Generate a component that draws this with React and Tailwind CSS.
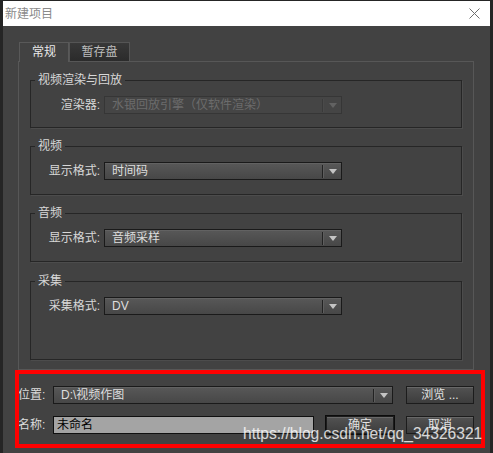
import React from "react";

function Arrow({ disabled }) {
  return (
    <div className="flex h-full w-[19px] items-center">
      <div className="flex h-[13px]">
        <span className={disabled ? "w-px bg-[#3a3a3a]" : "w-px bg-[#222222]"} />
        <span className={disabled ? "w-px bg-[#4a4a4a]" : "w-px bg-[#5e5e5e]"} />
      </div>
      <svg className="ml-[5px]" width="8" height="5" viewBox="0 0 8 5">
        <path d="M0 0 H8 L4 5 Z" fill={disabled ? "#626262" : "#c4c4c4"} />
      </svg>
    </div>
  );
}

function Select({ value, className = "", disabled }) {
  return (
    <div
      className={
        "flex h-[18px] items-center justify-between border text-[12px] leading-none " +
        (disabled
          ? "border-[#363636] bg-[#454545] text-[#6c6c6c] "
          : "border-[#1a1a1a] bg-gradient-to-b from-[#585858] to-[#474747] text-[#dedede] shadow-[inset_0_1px_0_#626262] ") +
        className
      }
    >
      <span className="pl-[7px] whitespace-nowrap">{value}</span>
      <Arrow disabled={disabled} />
    </div>
  );
}

function Button({ children, className = "" }) {
  return (
    <div
      className={
        "flex items-center justify-center border border-[#1c1c1c] bg-gradient-to-b from-[#525252] to-[#3d3d3d] text-[12px] leading-none text-[#e2e2e2] shadow-[inset_0_1px_0_#686868] " +
        className
      }
    >
      {children}
    </div>
  );
}

function Group({ title, className = "", children }) {
  return (
    <div
      className={
        "relative border border-[#262626] pt-[15px] shadow-[1px_1px_0_#4c4c4c] " + className
      }
    >
      <span className="absolute -top-[8px] left-[4px] bg-[#424242] px-[3px] text-[12px] leading-[14px] text-[#d8d8d8]">
        {title}
      </span>
      {children}
    </div>
  );
}

function Row({ label, children }) {
  return (
    <div className="flex items-center">
      <span className="w-[69px] text-right text-[12px] leading-none text-[#d8d8d8] whitespace-nowrap">
        {label}:
      </span>
      <div className="ml-[4px]">{children}</div>
    </div>
  );
}

export default function App() {
  return (
    <div className="relative flex h-[453px] w-[493px] flex-col overflow-hidden bg-[#252525] px-[3px] pt-px font-['Liberation_Sans','Noto_Sans_CJK_SC',sans-serif]">
      {/* title bar */}
      <div className="flex h-[25px] items-center justify-between bg-white pl-[2px] pr-[10px]">
        <span className="text-[12px] text-[#8a8a8a]">新建项目</span>
        <svg width="11" height="11" viewBox="0 0 11 11">
          <path d="M0.5 0.5 L10.5 10.5 M10.5 0.5 L0.5 10.5" stroke="#6e6e6e" strokeWidth="1" />
        </svg>
      </div>

      <div className="flex-1 bg-[#424242] pt-[16px]">
        {/* tabs */}
        <div className="ml-[16px] flex items-start">
          <div className="relative z-10 -mb-px flex h-[20px] w-[50px] items-start justify-center border border-b-0 border-[#595959] bg-[#424242] pt-[3px] text-[12px] leading-none text-[#e8e8e8]">
            常规
          </div>
          <div className="flex h-[19px] w-[61px] items-center justify-center border border-b-0 border-[#555555] bg-gradient-to-b from-[#383838] to-[#2b2b2b] text-[12px] leading-none text-[#bdbdbd]">
            暂存盘
          </div>
        </div>

        {/* panel */}
        <div className="ml-[15px] w-[456px] border border-[#575757] px-[11px] pb-[9px] pt-[18px]">
          <Group title="视频渲染与回放" className="h-[48px]">
            <Row label="渲染器">
              <Select value="水银回放引擎（仅软件渲染）" className="w-[238px]" disabled />
            </Row>
          </Group>
          <Group title="视频" className="mt-[18px] h-[49px]">
            <Row label="显示格式">
              <Select value="时间码" className="w-[238px]" />
            </Row>
          </Group>
          <Group title="音频" className="mt-[18px] h-[49px]">
            <Row label="显示格式">
              <Select value="音频采样" className="w-[238px]" />
            </Row>
          </Group>
          <Group title="采集" className="mt-[19px] h-[79px]">
            <Row label="采集格式">
              <Select value="DV" className="w-[238px]" />
            </Row>
          </Group>
        </div>

        {/* location / name */}
        <div className="pl-[15px] pt-[16px] text-[12px] text-[#dcdcdc]">
          <div className="flex h-[18px] items-center">
            <span className="w-[35px] leading-none">位置:</span>
            <Select value="D:\视频作图" className="w-[340px]" />
            <Button className="ml-[13px] h-[18px] w-[68px]">浏览 ...</Button>
          </div>
          <div className="mt-[12px] flex h-[18px] items-center">
            <span className="w-[35px] leading-none">名称:</span>
            <div className="flex h-[18px] w-[261px] items-center border border-[#101010] bg-[#a4a4a4] pl-[3px] leading-none text-black">
              未命名
            </div>
            <div className="ml-[11px] h-[20px] w-[70px] border border-[#0c0c0c]">
              <Button className="h-full w-full">确定</Button>
            </div>
            <Button className="ml-[11px] h-[18px] w-[68px]">取消</Button>
          </div>
        </div>
      </div>

      {/* red annotation frame */}
      <div className="pointer-events-none absolute left-[15px] top-[370px] h-[78px] w-[470px] border-4 border-[#ff0000]" />

      {/* watermark */}
      <span className="pointer-events-none absolute left-[243px] top-[426px] font-['Liberation_Sans',sans-serif] text-[15.6px] leading-[16px] text-white/80 whitespace-nowrap">
        https://blog.csdn.net/qq_34326321
      </span>
    </div>
  );
}
